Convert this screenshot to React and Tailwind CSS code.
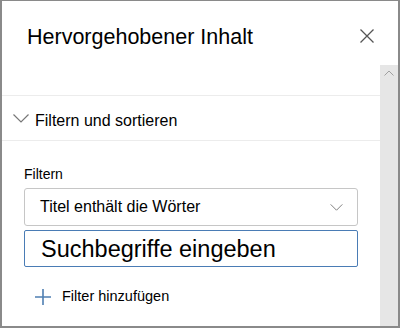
const ChevronDown = ({ className }) => (
  <svg viewBox="0 0 16 9" className={className} fill="none" stroke="currentColor" strokeWidth="1.2">
    <path d="M0.5 0.5 L8 8 L15.5 0.5" />
  </svg>
);

const App = () => {
  return (
    <div className="w-[400px] h-[328px] bg-white border-2 border-t border-[#8a8a8a] flex flex-col overflow-hidden font-['Liberation_Sans',Arial,sans-serif] text-black">
      {/* header */}
      <div className="h-[64px] shrink-0 flex items-center justify-between pl-[25px] pr-[24px] pt-[10px]">
        <h1 className="text-[21.5px] leading-none">Hervorgehobener Inhalt</h1>
        <svg viewBox="0 0 14 14" className="w-[14px] h-[14px] text-[#555] mt-[-5px]" stroke="currentColor" strokeWidth="1.3">
          <path d="M0.5 0.5 L13.5 13.5 M13.5 0.5 L0.5 13.5" />
        </svg>
      </div>

      <div className="flex flex-1 min-h-0">
        {/* panel content */}
        <div className="flex-1 flex flex-col">
          <div className="h-[31px] border-b border-[#ececec]" />
          <div className="h-[45px] flex items-center gap-[6px] pl-[11px] pt-[5px] border-b border-[#ececec]">
            <ChevronDown className="w-[16px] h-[9px] text-[#777] mb-[4px]" />
            <span className="text-[16px]">Filtern und sortieren</span>
          </div>

          <div className="pl-[22px] pr-[22px] pt-[25px]">
            <div className="text-[14px] leading-[16px] mb-[6px]">Filtern</div>
            <div className="h-[38px] border border-[#c6c6c6] rounded-[3px] flex items-center justify-between pl-[15px] pr-[14px]">
              <span className="text-[16px]">Titel enthält die Wörter</span>
              <ChevronDown className="w-[13px] h-[7px] text-[#777]" />
            </div>
            <div className="h-[37px] mt-[4px] border border-[#4a7cb5] rounded-[2px] flex items-center pl-[16px]">
              <span className="text-[23.5px] leading-none pt-[2px]">Suchbegriffe eingeben</span>
            </div>
            <div className="flex items-center gap-[11px] mt-[19px] pl-[11px]">
              <svg viewBox="0 0 16 16" className="w-[16px] h-[16px] text-[#4f7fb2]" stroke="currentColor" strokeWidth="1.6">
                <path d="M8 0 V16 M0 8 H16" />
              </svg>
              <span className="text-[14.5px]">Filter hinzufügen</span>
            </div>
          </div>
        </div>

        {/* scrollbar */}
        <div className="w-[18px] bg-[#e6e6e6] flex justify-center pt-[5px]">
          <svg viewBox="0 0 10 6" className="w-[10px] h-[6px] text-[#a0a0a0]" fill="none" stroke="currentColor" strokeWidth="1">
            <path d="M0.5 5.5 L5 1 L9.5 5.5" />
          </svg>
        </div>
      </div>
    </div>
  );
};

export default App;
